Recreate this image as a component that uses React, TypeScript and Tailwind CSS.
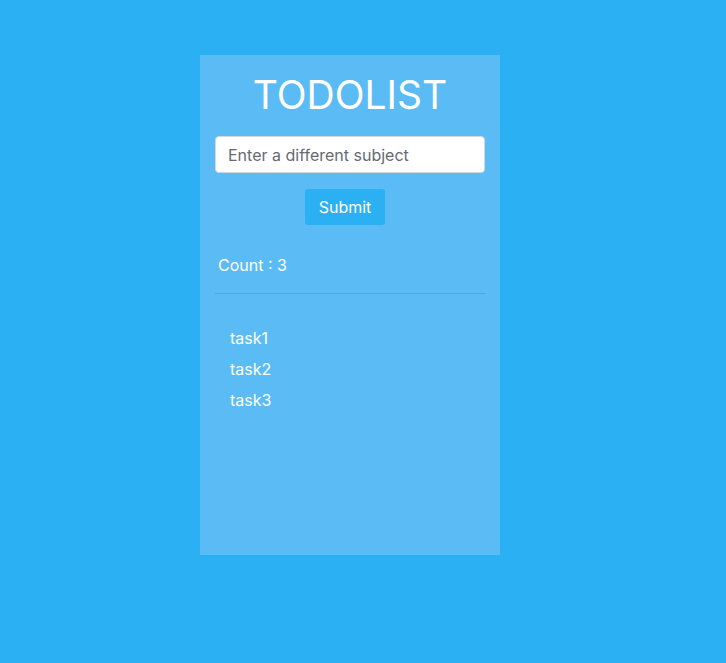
import { useState } from 'react'

export default function App() {
  const [tasks] = useState(['task1', 'task2', 'task3'])

  return (
    <div
      className="min-h-[663px] w-full bg-[#2cb0f4] pt-[55px] pl-[200px]"
      style={{ fontFamily: 'Inter, "Noto Sans", sans-serif' }}
    >
      <div className="flex h-[500px] w-[300px] flex-col bg-[#5bbbf4] px-[15px] text-white">
        <h1 className="mt-[15px] text-center text-[39px] leading-[50px] font-normal">TODOLIST</h1>
        <input
          className="mt-[16px] h-[37px] w-full rounded-[4px] border border-[#d0d7de] bg-white px-3 text-[16px] text-gray-700 placeholder:text-[#646b72] outline-none"
          placeholder="Enter a different subject"
        />
        <div className="mt-[16px] flex justify-center pr-[10px]">
          <button className="h-[36px] w-[80px] rounded-[3px] bg-[#2cb0f4] text-[16px] text-white">Submit</button>
        </div>
        <div className="mt-[28px] px-[3px] text-[16px] leading-[24px]">Count : {tasks.length}</div>
        <hr className="mt-[16px] border-t border-[#4aaae6]" />
        <ul className="mt-[32px] pl-[15px] text-[16px]">
          {tasks.map((t) => (
            <li key={t} className="h-[31px] leading-[24px]">{t}</li>
          ))}
        </ul>
      </div>
    </div>
  )
}
